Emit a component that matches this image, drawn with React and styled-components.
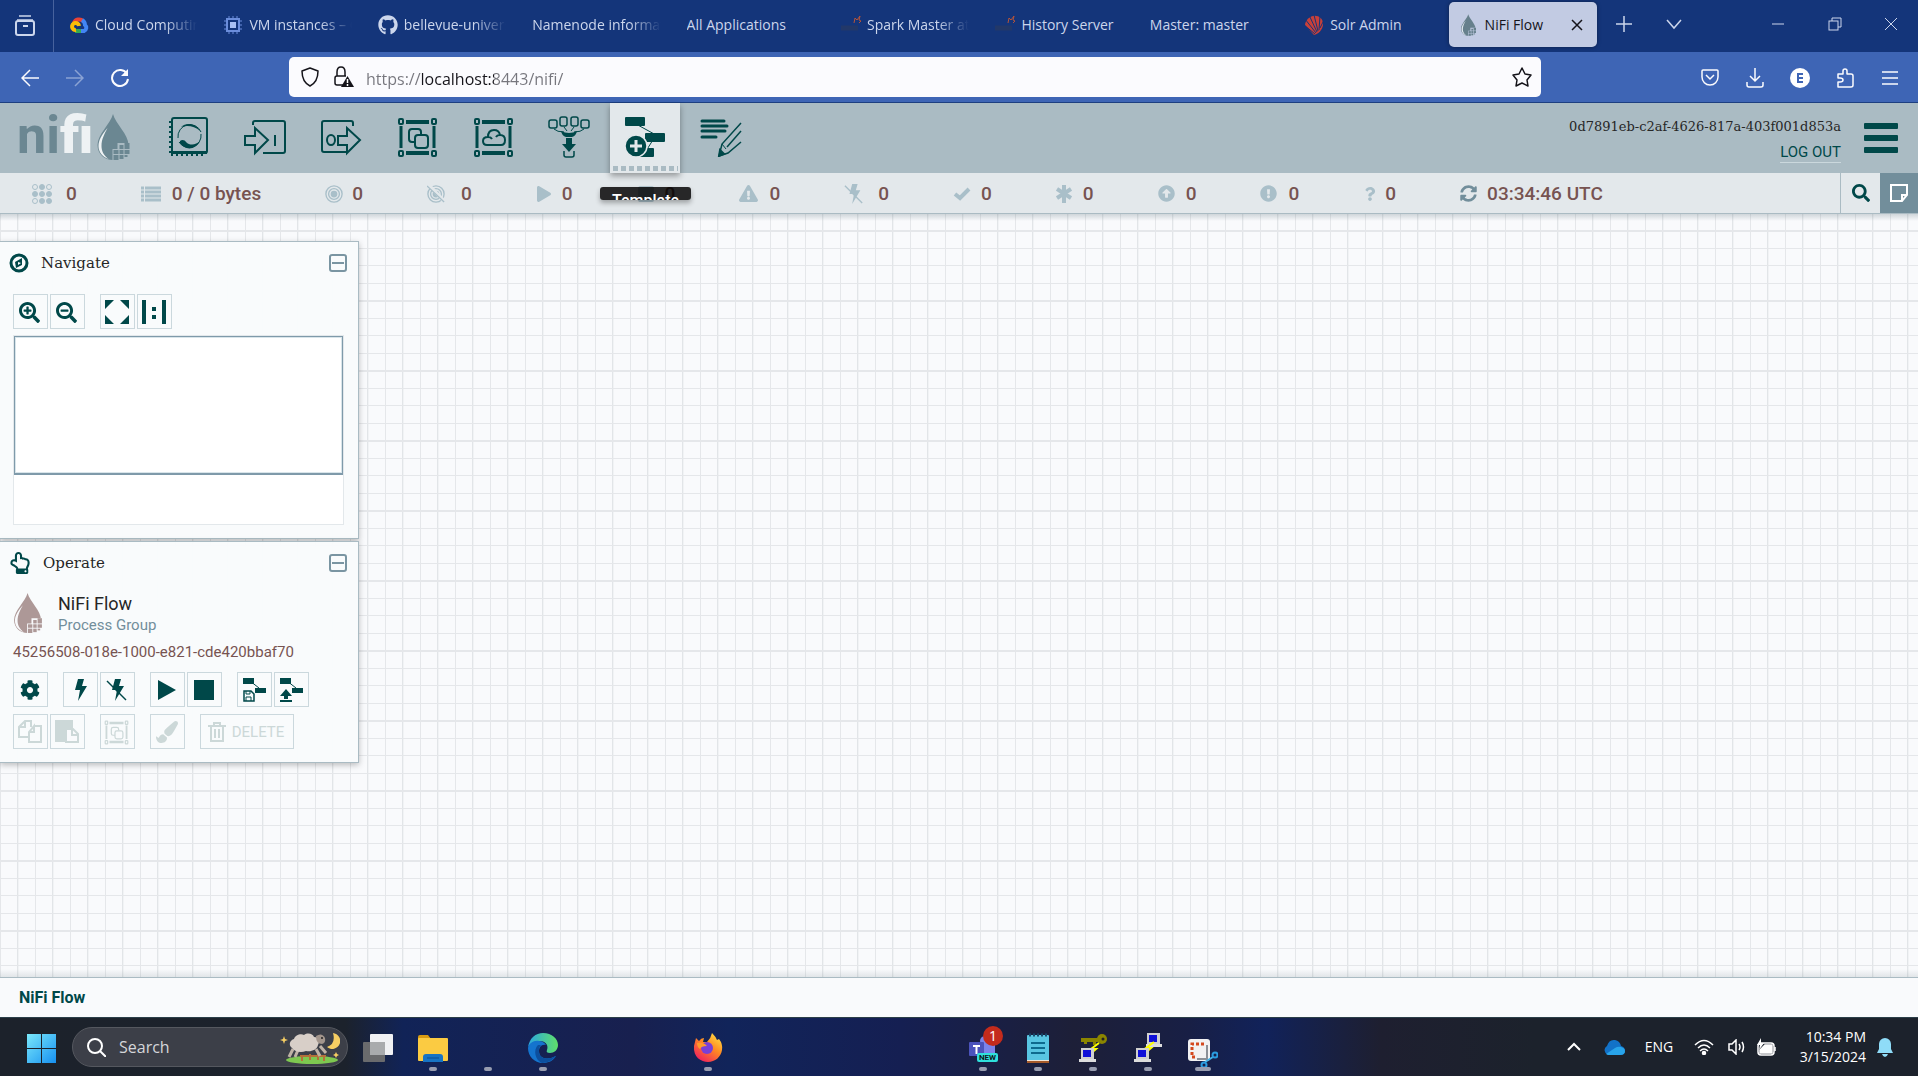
import React from "react";
import styled, { createGlobalStyle, css } from "styled-components";
import {
  FaPlay, FaArrowAltCircleUp, FaExclamationTriangle, FaExclamationCircle,
  FaQuestion, FaSyncAlt, FaSearch, FaSearchPlus, FaSearchMinus, FaCog, FaPaintBrush,
  FaRegHandPointUp, FaGithub, FaStop,
} from "react-icons/fa";

const teal = "#004849";
const slate = "#728e9b";
const mist = "#aabbc3";
const brown = "#775351";
const ui = `"Open Sans", "Noto Sans", sans-serif`;
const roboto = `Roboto, "Noto Sans", sans-serif`;
const slab = `"DejaVu Serif", serif`;

const Global = createGlobalStyle`
  *, *::before, *::after { box-sizing: border-box; }
  body { margin: 0; font-family: ${roboto}; }
  button { font: inherit; color: inherit; background: none; border: 0; padding: 0; cursor: pointer; }
  svg { display: block; flex: none; }
`;

const Page = styled.div`
  min-height: 100vh;
  display: flex;
  flex-direction: column;
`;

/* ---------- browser ---------- */
const TabBar = styled.header`
  display: flex;
  align-items: stretch;
  height: 52px;
  background: #14357a;
  color: #ccd6ec;
  font: 14px/20px ${ui};
`;
const ViewButton = styled.button`
  flex: 0 0 54px;
  display: grid;
  place-items: center;
  padding-right: 4px;
  border-right: 1px solid #47629d;
`;
const TabList = styled.div`
  flex: 0 1 1544px;
  min-width: 0;
  margin-left: 2px;
  display: grid;
  grid-template-columns: repeat(10, 1fr);
`;
const Tab = styled.div`
  display: flex;
  align-items: center;
  gap: 6px;
  min-width: 0;
  margin: 2px 3px 5px;
  padding: 1px 10px 0;
  border-radius: 5px;
  ${(p) => p.$active && css`
    background: #c2cbe3;
    color: #15141a;
    box-shadow: 0 0 4px rgba(0, 0, 0, 0.4);
  `}
`;
const Favicon = styled.span`
  flex: 0 0 20px;
  display: grid;
  place-items: center;
`;
const TabTitle = styled.button`
  flex: 1;
  min-width: 0;
  overflow: hidden;
  white-space: nowrap;
  text-align: left;
  ${(p) => p.$fade && css`mask-image: linear-gradient(90deg, #000 calc(100% - 32px), transparent);`}
`;
const IconButton = styled.button`
  display: grid;
  place-items: center;
  flex: 0 0 ${(p) => p.$w || 45}px;
  height: ${(p) => p.$h || 40}px;
  color: ${(p) => p.$color || "inherit"};
`;
const TabTools = styled.div`
  display: flex;
  align-items: center;
  height: 48px;
`;
const WindowTools = styled(TabTools)`
  margin-left: auto;
`;
const NavBar = styled.div`
  display: grid;
  grid-template-columns: 289px minmax(300px, 1252px) minmax(240px, 1fr);
  align-items: center;
  height: 51px;
  background: #3e65b5;
  border-bottom: 1px solid #1d3f80;
  color: #fbfbfe;
`;
const NavGroup = styled.div`
  display: flex;
  padding: 2px 6px 0 7px;
  justify-content: ${(p) => (p.$end ? "flex-end" : "flex-start")};
`;
const UrlBox = styled.form`
  display: flex;
  align-items: center;
  height: 40px;
  padding: 0 2px 0 3px;
  border-radius: 5px;
  background: #fbfbfe;
  color: #15141a;
`;
const UrlInput = styled.input`
  flex: 1;
  min-width: 0;
  margin-left: 5px;
  padding: 3px 0 0;
  border: 0;
  outline: 0;
  font: 16px/24px ${ui};
  color: transparent;
  background: linear-gradient(90deg, #76767d 0 56px, #15141a 56px 128px, #76767d 128px);
  background-clip: text;
  -webkit-background-clip: text;
`;

/* ---------- nifi header ---------- */
const NifiHeader = styled.header`
  display: flex;
  align-items: center;
  height: 70px;
  background: ${mist};
`;
const Logo = styled.div`
  flex: 0 0 154px;
  display: flex;
  align-items: center;
  gap: 4px;
  padding: 0 0 4px 17px;
  color: #6b8792;
  font: 700 52px/52px ${roboto};
  b { color: #eef2f4; }
  svg { margin-top: 2px; }
`;
const ToolRow = styled.nav`
  display: flex;
  gap: 6px;
`;
const Tool = styled.button`
  position: relative;
  width: 70px;
  height: 70px;
  display: grid;
  place-items: center;
  padding-bottom: 2px;
  color: ${teal};
  ${(p) => p.$active && css`
    background: #e3e8eb;
    box-shadow: 0 3px 6px rgba(0, 0, 0, 0.35);
    &::after {
      content: "";
      position: absolute;
      left: 3px;
      right: 2px;
      bottom: 2px;
      height: 5px;
      background: repeating-linear-gradient(90deg, ${mist} 0 5px, transparent 5px 8px);
    }
  `}
`;
const Tooltip = styled.span`
  position: absolute;
  z-index: 2;
  top: 84px;
  left: -10px;
  width: 91px;
  height: 13px;
  padding-top: 4px;
  overflow: hidden;
  border-radius: 3px;
  background: rgba(0, 0, 0, 0.83);
  box-shadow: 0 3px 5px rgba(0, 0, 0, 0.3);
  color: #fff;
  text-align: center;
  font: 500 16px/20px ${roboto};
`;
const User = styled.div`
  margin-left: auto;
  display: flex;
  flex-direction: column;
  align-items: flex-end;
  gap: 6px;
  padding-top: 4px;
  color: #262626;
  font: 13px/20px ${slab};
`;
const LogOut = styled.a`
  color: ${teal};
  font: 15px/19px ${roboto};
  text-decoration: none;
  border-bottom: 1px solid #cbd8dd;
`;
const Burger = styled.button`
  width: 34px;
  height: 30px;
  margin: 0 20px 0 23px;
  display: flex;
  flex-direction: column;
  justify-content: space-between;
  span { height: 6px; border-radius: 1px; background: ${teal}; }
`;

/* ---------- status ---------- */
const StatusBar = styled.div`
  display: flex;
  height: 41px;
  background: #e3e8eb;
  border-bottom: 1px solid ${mist};
`;
const StatusItems = styled.div`
  flex: 1;
  min-width: 0;
  overflow: hidden;
  display: flex;
  align-items: center;
  gap: 64px;
  padding: 1px 0 0 32px;
  color: ${brown};
  font: 500 19px/24px ${roboto};
`;
const Status = styled.div`
  display: flex;
  white-space: nowrap;
`;
const StatusIcon = styled.span`
  width: ${(p) => p.$w}px;
  display: flex;
  align-items: center;
  color: ${(p) => p.$color || "#a9bfc9"};
`;
const StatusButton = styled.button`
  width: ${(p) => (p.$dark ? 38 : 40)}px;
  display: grid;
  place-items: center;
  color: ${(p) => (p.$dark ? "#fff" : teal)};
  background: ${(p) => (p.$dark ? slate : "transparent")};
  border-left: ${(p) => (p.$dark ? "0" : `1px solid ${mist}`)};
`;

/* ---------- canvas ---------- */
const Canvas = styled.main`
  flex: 1;
  padding-top: 27px;
  background:
    linear-gradient(180deg, rgba(100, 120, 130, 0.28), transparent) 0 0 / 100% 7px no-repeat,
    linear-gradient(0deg, rgba(100, 120, 130, 0.16), transparent) 0 100% / 100% 8px no-repeat,
    linear-gradient(#e5e7ea 0 2px, transparent 2px) 0 16px / 70px 70px,
    linear-gradient(#e5e7ea 0 1px, transparent 1px 17px, #e5e7ea 17px 18px, transparent 18px) 0 -1px / 35px 35px,
    linear-gradient(90deg, #e5e7ea 0 1px, transparent 1px 17px, #e2e5e8 17px 18px, #f1f3f5 18px 19px, transparent 19px) 0 0 / 35px 35px,
    #f9fafc;
`;
const PanelStack = styled.div`
  width: 359px;
  display: flex;
  flex-direction: column;
  gap: 2px;
`;
const Panel = styled.section`
  padding: 0 14px 13px 13px;
  background: rgba(249, 251, 252, 0.97);
  border: 1px solid ${mist};
  border-left: 0;
  box-shadow: 0 2px 6px rgba(0, 0, 0, 0.25);
`;
const PanelHead = styled.div`
  display: flex;
  align-items: center;
  gap: 12px;
  height: 42px;
  margin: 0 -3px 0 -4px;
  color: ${teal};
`;
const PanelTitle = styled.h2`
  flex: 1;
  margin: 0;
  color: #262626;
  font: 400 15px/20px ${slab};
`;
const Collapse = styled.button`
  width: 18px;
  height: 18px;
  display: grid;
  place-items: center;
  border: 2px solid #7a95a2;
  border-radius: 3px;
  span { width: 12px; height: 2px; background: #7a95a2; }
`;
const ButtonRow = styled.div`
  display: flex;
  gap: 15px;
  margin-top: ${(p) => p.$top}px;
`;
const ButtonPair = styled.div`
  display: flex;
  gap: 2px;
`;
const Square = styled.button`
  display: flex;
  align-items: center;
  justify-content: center;
  gap: 6px;
  width: ${(p) => (p.$wide ? 94 : 35)}px;
  height: 35px;
  padding: 1px 2px 0 0;
  border: 1px solid #cbd8dd;
  color: ${teal};
  font: 15px/20px ${roboto};
  &:disabled { color: #ccd8d8; cursor: default; }
`;
const Birdseye = styled.div`
  height: 190px;
  margin-top: 6px;
  background: #fff;
  border: 1px solid #e3e8eb;
`;
const Brush = styled.div`
  height: 139px;
  border: 2px solid #7f9aaa;
  border-width: 1px 1px 2px;
  box-shadow: inset 0 0 0 1px #d9e5ea;
`;
const Context = styled.div`
  display: flex;
  align-items: center;
  gap: 15px;
  margin-top: 8px;
`;
const ContextName = styled.div`
  color: #262626;
  font: 18px/24px ${roboto};
`;
const ContextType = styled.div`
  color: ${slate};
  font: 15px/18px ${roboto};
`;
const ContextId = styled.div`
  margin-top: 8px;
  color: ${brown};
  font: 15px/20px ${roboto};
`;
const Crumbs = styled.footer`
  display: flex;
  align-items: center;
  height: 40px;
  padding-left: 19px;
  background: #f9fafc;
  border-top: 1px solid ${mist};
  a { color: ${teal}; font: 700 16px/20px ${roboto}; text-decoration: none; }
`;

/* ---------- taskbar ---------- */
const Taskbar = styled.footer`
  display: flex;
  align-items: center;
  height: 59px;
  padding-left: 18px;
  border-top: 1px solid #2c3f49;
  background: linear-gradient(90deg, #1c222b 0, #1c222c 18%, #112357 21%, #18204f 33%, #11245a 38%, #151f52 47%, #1d1f38 56%, #181f45 62%, #11225a 66%, #1e1f30 72%, #1c222c 80%);
  color: #fff;
  font: 14px/20px ${ui};
`;
const SearchPill = styled.label`
  flex: 0 0 276px;
  min-width: 0;
  display: flex;
  align-items: center;
  gap: 13px;
  height: 40px;
  margin: 0 2px 0 8px;
  padding: 0 7px 0 14px;
  border: 1px solid #55585f;
  border-radius: 20px;
  background: #3c3f48;
`;
const SearchInput = styled.input`
  flex: 1;
  width: 0;
  min-width: 0;
  padding: 0;
  border: 0;
  outline: 0;
  background: none;
  font: 16px/24px ${ui};
  color: #d4d6da;
  &::placeholder { color: #d4d6da; opacity: 1; }
`;
const AppButton = styled.button`
  position: relative;
  flex: 0 0 ${(p) => p.$w || 55}px;
  height: 58px;
  display: grid;
  place-items: center;
  padding-top: ${(p) => (p.$low ? 14 : 2)}px;
  &::after {
    content: "";
    position: absolute;
    left: calc(50% - ${(p) => (p.$wideDot ? 8 : 4)}px);
    bottom: 5px;
    width: ${(p) => (p.$wideDot ? 16 : 8)}px;
    height: 4px;
    border-radius: 2px;
    background: ${(p) => (p.$dot ? "#989db0" : "transparent")};
  }
`;
const Spacer = styled.span`
  flex: 0 1 ${(p) => p.$w}px;
`;
const Badge = styled.span`
  position: absolute;
  top: 8px;
  right: 7px;
  width: 20px;
  height: 20px;
  border-radius: 50%;
  background: #c42b1c;
  font-size: 14px;
  text-align: center;
`;
const NewFlag = styled.span`
  position: absolute;
  top: 35px;
  left: 22px;
  width: 21px;
  height: 9px;
  border-radius: 2px;
  background: #2fe0dc;
  color: #10151c;
  font: 700 8px/9px ${roboto};
  text-align: center;
`;
const Tray = styled.div`
  margin-left: auto;
  display: flex;
  align-items: center;
  padding-right: 18px;
`;
const Clock = styled.button`
  width: 82px;
  margin-right: 4px;
  text-align: right;
  font: 14px/20px ${ui};
`;
const Lang = styled.button`
  width: 50px;
  font: 14px/20px ${ui};
`;

/* ---------- drawings ---------- */
const Svg = ({ w, h = w, vb, children, ...rest }) => (
  <svg width={w} height={h} viewBox={vb || `0 0 ${w} ${h}`} fill="none" stroke="currentColor" strokeWidth="2" aria-hidden="true" {...rest}>{children}</svg>
);

const Drop = ({ w, h, color, shine, gap }) => (
  <Svg w={w} h={h} vb="0 0 32 46" stroke="none">
    <path d="M15.500 0C13 10 0 20 0 31c0 9 7 15 15.500 15S31 40 31 31C31 20 18 10 15.500 0z" fill={color} />
    <path d="M10 14C4 21 1 26 1 32c0 6 4 11 10 13-5-4-7-8-7-13 0-7 3-12 6-18z" fill={shine} />
    <path d="M15 46V35h5v-6h12v17z" fill={gap} />
    <g fill={color}>
      <rect x="22" y="31" width="4" height="4" /><rect x="27" y="29" width="5" height="6" />
      <rect x="16" y="36" width="5" height="4" /><rect x="22" y="36" width="4" height="4" /><rect x="27" y="36" width="5" height="4" />
      <rect x="16" y="41" width="5" height="5" /><rect x="22" y="41" width="4" height="4" /><rect x="27" y="41" width="3" height="2" />
    </g>
  </Svg>
);

const ProcessorIcon = () => (
  <Svg w={40}>
    <rect x="3" y="1" width="35" height="35" rx="2" />
    <path d="M2 35.500h36" strokeWidth="3" />
    <path d="M1 4v34" strokeDasharray="2 3" />
    <path d="M2 38h34" strokeDasharray="2 3" />
    <path d="M9 21A12 12 0 0 1 32 15" strokeWidth="1" />
    <path d="M32 17A12 12 0 0 1 10 25" strokeWidth="1" />
    <path d="M12 10C17 5 27 6 31 14 26 9 18 8 12 10z" fill="currentColor" stroke="none" />
    <path d="M11 24c2-2 5-1 6 1 4 4 10 3 14-1-4 9-15 10-20 2z" fill="currentColor" stroke="none" />
  </Svg>
);
const InputIcon = () => (
  <Svg w={42} h={40}>
    <path d="M9 8V6q0-2 2-2h28q2 0 2 2v28q0 2-2 2H19" />
    <path d="M1 19h10v-8l13 12-13 13v-8H1z" />
    <path d="M31 18v11" />
  </Svg>
);
const OutputIcon = () => (
  <Svg w={42} h={40}>
    <path d="M33 9V6q0-2-2-2H4Q2 4 2 6v27q0 2 2 2h22" />
    <path d="M18 19h9v-8l13 12-13 13v-8h-9z" />
    <ellipse cx="11" cy="23" rx="4" ry="5" />
  </Svg>
);
const Frame = () => (
  <>
    <path d="M4 9v22M37 9v22" strokeWidth="3" />
    <path d="M9 5h23M9 36h23" strokeWidth="4" />
    {[[2, 2], [35, 2], [2, 34], [35, 34]].map(([x, y]) => <rect key={`${x}${y}`} x={x} y={y} width="4" height="5" rx="1" />)}
  </>
);
const GroupIcon = ({ w = 41 }) => (
  <Svg w={w} vb="0 0 41 41">
    <Frame />
    <path d="M18 25h-3q-3 0-3-3v-7q0-3 3-3h6q3 0 3 3v2" />
    <rect x="18" y="18" width="13" height="13" rx="3" />
  </Svg>
);
const RemoteIcon = () => (
  <Svg w={41}>
    <Frame />
    <path d="M14 28q-4 0-4-4t5-4q0-7 6-7 5 0 6 5 5 0 5 5t-4 5zM15 20q3 0 4 2M27 18q-3 0-4 2" />
  </Svg>
);
const FunnelIcon = () => (
  <Svg w={42} h={42} strokeWidth="1.500">
    <rect x="1" y="4" width="8" height="8" rx="2" /><rect x="12" y="1" width="7" height="9" rx="2" />
    <rect x="23" y="1" width="7" height="9" rx="2" /><rect x="33" y="4" width="8" height="8" rx="2" />
    <path d="M6 13q3 3 10 3M16 11l3 4M26 11l-3 4M36 13q-3 3-10 3" strokeWidth="1" />
    <path d="M13 15q8 4 16 0-1 5-5 6h-6q-4-1-5-6z" fill="currentColor" stroke="none" />
    <path d="M18 22h6v6h4l-7 8-7-8h4z" fill="currentColor" stroke="none" />
    <path d="M16 35v4q0 2 2 2h6q2 0 2-2v-4" />
  </Svg>
);
const TemplateIcon = () => (
  <Svg w={42} h={42}>
    <path d="M12 8l20 11L22 35" strokeWidth="1" />
    <g fill="currentColor" stroke="none">
      <rect x="1" y="1" width="20" height="9" rx="1" /><rect x="21" y="17" width="20" height="9" rx="1" /><rect x="14" y="32" width="16" height="9" rx="1" />
    </g>
    <circle cx="12" cy="30" r="11" fill="currentColor" stroke="#e3e8eb" strokeWidth="1.500" />
    <path d="M12 24v12M6 30h12" stroke="#e3e8eb" strokeWidth="3" />
  </Svg>
);
const LabelIcon = () => (
  <Svg w={42} h={40}>
    <path d="M2 4h22M2 9h25M2 14h23M2 20h14" strokeWidth="3" strokeLinecap="round" />
    <path d="M41 6L22 27l-3 12 9-3 13-11" strokeWidth="1.500" />
    <path d="M27 30l14-16" strokeWidth="1.500" /><path d="M22 27l4 5" strokeWidth="1" />
    <path d="M20 33l4 4-5 2z" fill="currentColor" />
  </Svg>
);
const CompassIcon = () => (
  <Svg w={20} strokeWidth="3">
    <circle cx="10" cy="10" r="8" />
    <path d="M6 9l7-4v7l-6 3z" fill="currentColor" stroke="none" /><path d="M9 9v3l3-2z" fill="#f9fafc" stroke="none" />
  </Svg>
);
const SmallTemplate = ({ children }) => (
  <Svg w={24} h={26}>
    <path d="M8 4l9 7" strokeWidth="1" />
    <g fill="currentColor" stroke="none"><rect x="1" y="1" width="11" height="6" /><rect x="13" y="11" width="11" height="5" /></g>
    {children}
  </Svg>
);
const Bolt = ({ off, w = 20 }) => (
  <Svg w={w} vb="0 0 20 22" stroke="none">
    <path d="M8 0h6l-2 7h5L8 22l2-11H5z" fill="currentColor" />
    {off && <path d="M0 2l19 19" stroke="currentColor" strokeWidth="1.500" />}
  </Svg>
);
const Target = ({ off }) => (
  <Svg w={18} vb="0 0 20 20" strokeWidth="1.500">
    <circle cx="10" cy="10" r="9" /><circle cx="10" cy="10" r="6" /><circle cx="10" cy="10" r="3" fill="currentColor" />
    {off && <><path d="M2 0l18 19" stroke="#e3e8eb" strokeWidth="4" /><path d="M0 1l19 18" /></>}
  </Svg>
);
const Threads = () => (
  <Svg w={20} strokeWidth="1">
    {[3, 10, 17].map((y, r) => [3, 10, 17].map((x, c) => (
      <circle key={`${x}-${y}`} cx={x} cy={y} r="2.500" fill={(r + c) % 2 || (r === 1 && c < 2) || (r === 2 && c === 2) ? "currentColor" : "none"} />
    )))}
  </Svg>
);
const QueueIcon = () => (
  <Svg w={20} h={16} strokeWidth="3"><path d="M0 2h3M0 6h3M0 10h3M0 14h3M4 2h16M4 6h16M4 10h16M4 14h16" /></Svg>
);
const CheckIcon = () => <Svg w={18} h={14} strokeWidth="4"><path d="M2 7l5 4 9-9" /></Svg>;
const AsteriskIcon = () => <Svg w={16} h={18} strokeWidth="4"><path d="M8 0v18M1 4l14 9M15 4L1 13" /></Svg>;
const CloudLogo = () => (
  <Svg w={20} strokeWidth="4">
    <path d="M5 8a5.500 5.500 0 0 1 9-2" stroke="#ea4335" /><path d="M13 5a6 6 0 0 1 3 5 3.500 3.500 0 0 1-1 6h-4" stroke="#4285f4" />
    <path d="M12 16H6" stroke="#34a853" /><path d="M7 15a3.500 3.500 0 1 1 3-4" stroke="#fbbc05" />
  </Svg>
);
const Chip = () => (
  <Svg w={20}>
    <path d="M6 1v18M10 1v18M14 1v18M1 6h18M1 10h18M1 14h18" stroke="#6b8ddb" strokeWidth="1" />
    <rect x="4" y="4" width="12" height="12" fill="#14357a" stroke="#6b8ddb" /><rect x="7" y="7" width="6" height="6" fill="#a9c0f3" stroke="none" />
  </Svg>
);
const Spark = () => (
  <Svg w={20}>
    <path d="M0 13h17" stroke="#2c3a5e" strokeWidth="5" opacity=".6" />
    <path d="M13 8l1-5 2 2 3-4-1 4 2 1-2 2" stroke="#b5543a" strokeWidth="1" />
  </Svg>
);
const Solr = () => (
  <Svg w={20}>
    <path d="M10 20C14 19 19 15 19 9S14 0 9 1 1 7 1 10z" fill="#c8403a" stroke="none" />
    <path d="M12 18L1 4M13 17L5 0M14 16L10 0M15 15l1-14M16 13l4-8M11 19L0 10" stroke="#14357a" strokeWidth="1" />
  </Svg>
);

const tabs = [
  ["Cloud Computing Services", <CloudLogo />, true],
  ["VM instances – Compute", <Chip />, true],
  ["bellevue-university/dsc", <FaGithub size={20} />, true],
  ["Namenode information", null, true],
  ["All Applications", null],
  ["Spark Master at spark", <Spark />, true],
  ["History Server", <Spark />],
  ["Master: master", null],
  ["Solr Admin", <Solr />],
];
const tools = [
  ["Processor", ProcessorIcon], ["Input Port", InputIcon], ["Output Port", OutputIcon], ["Process Group", GroupIcon],
  ["Remote Process Group", RemoteIcon], ["Funnel", FunnelIcon], ["Template", TemplateIcon], ["Label", LabelIcon],
];
const statuses = [
  [<Threads />, 34, "0"], [<QueueIcon />, 31, "0 / 0 bytes"], [<Target />, 27, "0"], [<Target off />, 34, "0"],
  [<FaPlay size={16} />, 26, "0"], [<FaStop size={18} />, 28, "0"], [<FaExclamationTriangle size={19} />, 30, "0"],
  [<Bolt off />, 34, "0"], [<CheckIcon />, 28, "0"], [<AsteriskIcon />, 27, "0"],
  [<FaArrowAltCircleUp size={17} />, 28, "0"], [<FaExclamationCircle size={17} />, 28, "0"], [<FaQuestion size={14} />, 22, "0"],
];

export default function App() {
  return (
    <>
      <Global />
      <Page>
        <TabBar>
          <ViewButton aria-label="Recent browsing">
            <Svg w={20} h={22}><path d="M4 1h12M2 5h16" strokeWidth="1.500" /><rect x="1" y="6" width="18" height="14" rx="2" /><path d="M8 11h5" /></Svg>
          </ViewButton>
          <TabList>
            {tabs.map(([title, icon, fade]) => (
              <Tab key={title}>{icon && <Favicon>{icon}</Favicon>}<TabTitle $fade={fade}>{title}</TabTitle></Tab>
            ))}
            <Tab $active>
              <Favicon><Drop w={15} h={22} color="#66808c" shine="#dfe6ee" gap="#c2cbe3" /></Favicon>
              <TabTitle>NiFi Flow</TabTitle>
              <IconButton $w={20} aria-label="Close tab"><Svg w={12} strokeWidth="1.500"><path d="M1 1l10 10M11 1L1 11" /></Svg></IconButton>
            </Tab>
          </TabList>
          <TabTools>
            <IconButton $w={47} aria-label="New tab"><Svg w={16} strokeWidth="1.500"><path d="M8 0v16M0 8h16" /></Svg></IconButton>
            <IconButton $w={54} aria-label="List all tabs"><Svg w={16}><path d="M1 4l7 8 7-8" strokeWidth="1.500" /></Svg></IconButton>
          </TabTools>
          <WindowTools>
            <IconButton $w={57} aria-label="Minimize"><Svg w={12} strokeWidth="1"><path d="M0 6h12" /></Svg></IconButton>
            <IconButton $w={57} aria-label="Restore"><Svg w={14} strokeWidth="1"><rect x="1" y="4" width="9" height="9" /><path d="M4 4V1h9v9h-3" /></Svg></IconButton>
            <IconButton $w={55} aria-label="Close"><Svg w={14} strokeWidth="1"><path d="M1 1l12 12M13 1L1 13" /></Svg></IconButton>
          </WindowTools>
        </TabBar>
        <NavBar>
          <NavGroup>
            <IconButton aria-label="Back"><Svg w={18}><path d="M18 9H1M9 1L1 9l8 8" strokeWidth="1.500" /></Svg></IconButton>
            <IconButton $color="#8ba3d4" aria-label="Forward"><Svg w={18}><path d="M0 9h17M9 1l8 8-8 8" strokeWidth="1.500" /></Svg></IconButton>
            <IconButton aria-label="Reload"><Svg w={20}><path d="M17 6a8 8 0 1 0 1 5" /><path d="M18 1v7h-7z" fill="currentColor" stroke="none" /></Svg></IconButton>
          </NavGroup>
          <UrlBox>
            <IconButton $w={35} type="button" aria-label="Tracking protection"><Svg w={18} h={20} strokeWidth="1.500"><path d="M9 1l8 3c0 7-2 12-8 15C3 16 1 11 1 4z" strokeLinejoin="round" /></Svg></IconButton>
            <IconButton $w={34} type="button" aria-label="Site security"><Svg w={20} h={22} strokeWidth="1.500"><path d="M9 19H3q-2 0-2-2v-5q0-2 2-2h9M3 10V6q0-5 4-5t4 5v4" /><path d="M13.500 10L20 21H7z" fill="currentColor" stroke="none" /><path d="M13.500 13v4M13.500 18v2" stroke="#fff" /></Svg></IconButton>
            <UrlInput aria-label="Address" defaultValue="https://localhost:8443/nifi/" />
            <IconButton $w={35} type="button" aria-label="Bookmark this page"><Svg w={20} strokeWidth="1.500"><path d="M10 1l3 6 6 1-4 5 1 6-6-3-6 3 1-6-4-5 6-1z" strokeLinejoin="round" /></Svg></IconButton>
          </UrlBox>
          <NavGroup $end>
            <IconButton aria-label="Save to Pocket"><Svg w={18} strokeWidth="1.500"><path d="M2 1h14q1 0 1 1v6a8 8 0 0 1-16 0V2q0-1 1-1z" /><path d="M5 6l4 4 4-4" /></Svg></IconButton>
            <IconButton aria-label="Downloads"><Svg w={18} h={20}><path d="M9 0v13M4 8l5 5 5-5M1 14v3q0 2 2 2h12q2 0 2-2v-3" strokeWidth="1.500" /></Svg></IconButton>
            <IconButton aria-label="Account"><Svg w={20}><circle cx="10" cy="10" r="10" fill="#fff" stroke="none" /><path d="M13 6H8v8h5M8 10h5" stroke="#3e65b5" /></Svg></IconButton>
            <IconButton aria-label="Extensions"><Svg w={18} h={20} strokeWidth="1.500"><path d="M2 6h5V3q0-2 2-2t2 2v3h4q2 0 2 2v9q0 2-2 2H2v-5h2q3 0 3-2t-3-2H2z" strokeLinejoin="round" /></Svg></IconButton>
            <IconButton aria-label="Menu"><Svg w={16} h={14} strokeWidth="1.500"><path d="M0 1h16M0 7h16M0 13h16" /></Svg></IconButton>
          </NavGroup>
        </NavBar>

        <NifiHeader>
          <Logo><span>ni<b>fi</b></span><Drop w={33} h={46} color="#6b8792" shine="#eef2f4" gap={mist} /></Logo>
          <ToolRow aria-label="Components">
            {tools.map(([name, Icon]) => (
              <Tool key={name} aria-label={name} $active={name === "Template"}>
                <Icon />
                {name === "Template" && <Tooltip>Template</Tooltip>}
              </Tool>
            ))}
          </ToolRow>
          <User><span>0d7891eb-c2af-4626-817a-403f001d853a</span><LogOut href="#logout">LOG OUT</LogOut></User>
          <Burger aria-label="Global menu"><span /><span /><span /></Burger>
        </NifiHeader>

        <StatusBar>
          <StatusItems>
            {statuses.map(([icon, w, value], i) => (
              <Status key={i}><StatusIcon $w={w}>{icon}</StatusIcon>{value}</Status>
            ))}
            <Status><StatusIcon $w={27} $color={slate}><FaSyncAlt size={17} /></StatusIcon>03:34:46 UTC</Status>
          </StatusItems>
          <StatusButton aria-label="Search"><FaSearch size={18} /></StatusButton>
          <StatusButton $dark aria-label="Bulletins"><Svg w={18}><path d="M1 1h16v10l-5 6H1z" /><path d="M17 11h-5v6" /></Svg></StatusButton>
        </StatusBar>

        <Canvas>
          <PanelStack>
            <Panel>
              <PanelHead>
                <CompassIcon /><PanelTitle>Navigate</PanelTitle>
                <Collapse aria-label="Collapse Navigate"><span /></Collapse>
              </PanelHead>
              <ButtonRow $top={10}>
                <ButtonPair>
                  <Square aria-label="Zoom in"><FaSearchPlus size={21} /></Square>
                  <Square aria-label="Zoom out"><FaSearchMinus size={21} /></Square>
                </ButtonPair>
                <ButtonPair>
                  <Square aria-label="Fit"><Svg w={24} stroke="none"><path d="M0 0h9L0 9zM24 0v9l-9-9zM0 24v-9l9 9zM24 24h-9l9-9z" fill="currentColor" /></Svg></Square>
                  <Square aria-label="Actual size"><Svg w={24} strokeWidth="4"><path d="M2 0v24M22 0v24M12 7v4M12 15v4" /></Svg></Square>
                </ButtonPair>
              </ButtonRow>
              <Birdseye><Brush /></Birdseye>
            </Panel>
            <Panel>
              <PanelHead>
                <FaRegHandPointUp size={22} /><PanelTitle>Operate</PanelTitle>
                <Collapse aria-label="Collapse Operate"><span /></Collapse>
              </PanelHead>
              <Context>
                <Drop w={30} h={40} color="#ad9897" shine="#f9fafc" gap="#f9fafc" />
                <div><ContextName>NiFi Flow</ContextName><ContextType>Process Group</ContextType></div>
              </Context>
              <ContextId>45256508-018e-1000-e821-cde420bbaf70</ContextId>
              <ButtonRow $top={10}>
                <Square aria-label="Configuration"><FaCog size={20} /></Square>
                <ButtonPair>
                  <Square aria-label="Enable"><Bolt w={22} /></Square>
                  <Square aria-label="Disable"><Bolt off w={22} /></Square>
                </ButtonPair>
                <ButtonPair>
                  <Square aria-label="Start"><Svg w={18} h={20} stroke="none"><path d="M0 0l18 10L0 20z" fill="currentColor" /></Svg></Square>
                  <Square aria-label="Stop"><Svg w={20} stroke="none"><rect width="20" height="20" fill="currentColor" /></Svg></Square>
                </ButtonPair>
                <ButtonPair>
                  <Square aria-label="Create template"><SmallTemplate><path d="M2 14h7l3 3v7H2z" strokeWidth="1.500" /><path d="M4 14v3h4v-3M4 24v-4h5v4" strokeWidth="1" /></SmallTemplate></Square>
                  <Square aria-label="Upload template"><SmallTemplate><path d="M7 12l6 7H9v3H5v-3H1zM1 23h12v2H1z" fill="currentColor" stroke="none" /></SmallTemplate></Square>
                </ButtonPair>
              </ButtonRow>
              <ButtonRow $top={7}>
                <ButtonPair>
                  <Square disabled aria-label="Copy"><Svg w={24}><path d="M7 1h6v6M10 17H1V7l6-6v6H1" /><path d="M16 6h7v16H11V12l5-6v6h-5" /></Svg></Square>
                  <Square disabled aria-label="Paste"><Svg w={24}><path d="M1 1h16v6h-6v14H1z" fill="currentColor" /><path d="M11 9h7l5 5v8H11z" fill="#f9fafc" /><path d="M17 9v6h6" /></Svg></Square>
                </ButtonPair>
                <Square disabled aria-label="Group"><GroupIcon w={25} /></Square>
                <Square disabled aria-label="Change color"><FaPaintBrush size={22} /></Square>
                <Square disabled $wide>
                  <Svg w={18} h={20}><path d="M0 4h18M6 4V1h6v3M3 4v15h12V4M7 7v9M11 7v9" /></Svg>DELETE
                </Square>
              </ButtonRow>
            </Panel>
          </PanelStack>
        </Canvas>
        <Crumbs><a href="#root-group">NiFi Flow</a></Crumbs>

        <Taskbar>
          <AppButton $w={46} aria-label="Start">
            <Svg w={29} stroke="none"><defs><linearGradient id="win" x2="1" y2="1"><stop stopColor="#7be9fb" /><stop offset="1" stopColor="#1690f0" /></linearGradient></defs><path d="M0 0h14v14H0zM15 0h14v14H15zM0 15h14v14H0zM15 15h14v14H15z" fill="url(#win)" /></Svg>
          </AppButton>
          <SearchPill>
            <Svg w={19}><circle cx="8" cy="8" r="7" /><path d="M13 13l6 6" /></Svg>
            <SearchInput aria-label="Search" placeholder="Search" />
            <Svg w={60} h={34} stroke="none">
              <ellipse cx="32" cy="30" rx="26" ry="4" fill="#7ec850" />
              <path d="M22 25v6M30 24v6M38 24v6M44 25v6M20 26h26" stroke="#b4713a" />
              <path d="M13 19l-4 8M18 20l-3 7M36 19l4 7M40 16l6 7" stroke="#bfb2a6" strokeWidth="3" />
              <path d="M12 18c-4-3-2-8 2-9 1-4 7-6 10-4 4-3 9-1 10 2 5 0 6 5 4 8-1 5-7 7-12 6-5 2-11 1-14-3z" fill="#d8cfc8" />
              <path d="M36 6q6-4 9 2 1 5-3 6-6 0-6-8z" fill="#a2958c" /><circle cx="42" cy="8" r="1" fill="#222" />
              <path d="M53 3a8 8 0 1 1-6 14q9-3 6-14z" fill="#f6ce63" />
              <path d="M4 6l1 3 3 1-3 1-1 3-1-3-3-1 3-1zM56 22l1 2 2 1-2 1-1 2-1-2-2-1 2-1z" fill="#f6ce63" />
            </Svg>
          </SearchPill>
          <AppButton aria-label="Task view"><Svg w={30} h={28} stroke="none"><rect y="8" width="22" height="20" rx="1" fill="#6a6b6d" /><rect x="7" width="23" height="21" rx="1" fill="#f0f1f3" /><path d="M7 8h15v13H7z" fill="#a9abad" /></Svg></AppButton>
          <AppButton $dot aria-label="File Explorer"><Svg w={30} h={27} stroke="none"><path d="M0 2q0-2 2-2h8l3 4H0z" fill="#d99b12" /><rect y="3" width="30" height="23" rx="1" fill="#fbcb42" /><path d="M5 27v-5q0-3 3-3h14q3 0 3 3v5z" fill="#1774c4" /><path d="M9 23h12" stroke="#0c4f92" strokeWidth="1" /></Svg></AppButton>
          <AppButton $dot aria-label="Running application" />
          <AppButton $dot aria-label="Microsoft Edge">
            <Svg w={30} stroke="none">
              <defs><linearGradient id="edge" x2="1"><stop stopColor="#2ba6e0" /><stop offset="1" stopColor="#5fe06a" /></linearGradient></defs>
              <path d="M0 15C1 5 8 0 15 0c9 0 15 6 15 12 0 5-4 8-8 8-3 0-4-1-3-3 2-6-3-9-7-9C6 8 1 11 0 15z" fill="url(#edge)" />
              <path d="M0 15c1-5 6-8 11-7 3 0 6 2 7 4-5-1-7 3-7 6 0 7 7 10 17 5-3 5-8 7-13 7C6 30 0 23 0 15z" fill="#1474ce" />
              <path d="M10 12c-5 5-3 15 4 18 6 0 11-3 14-7-10 5-17 2-17-5 0-2 0-4 2-6z" fill="#0c4f9e" />
            </Svg>
          </AppButton>
          <Spacer $w={110} />
          <AppButton $dot aria-label="Firefox">
            <Svg w={30} stroke="none">
              <defs><linearGradient id="fox" x1="1" x2=".3" y2="1"><stop stopColor="#fff14a" /><stop offset=".5" stopColor="#ff8a22" /><stop offset="1" stopColor="#f0245c" /></linearGradient></defs>
              <path d="M1 13L3 5l3 3q2-3 5-3l-1 4h4q4-4 5-9 4 4 5 7l2-1q4 5 3 11c-1 7-7 12-14 12S0 24 1 13z" fill="url(#fox)" />
              <circle cx="14" cy="15" r="6" fill="#7a3fd6" /><path d="M4 10q6-2 10 3-6 0-7 3-3-2-3-6z" fill="#ff9a2a" />
            </Svg>
          </AppButton>
          <Spacer $w={220} />
          <AppButton $dot aria-label="Microsoft Teams">
            <Svg w={28} stroke="none"><circle cx="16" cy="7" r="5" fill="#7b83eb" /><path d="M10 10h16v10a7 7 0 0 1-16 2z" fill="#7b83eb" /><rect y="8" width="15" height="14" rx="1" fill="#4b53bc" /><path d="M4 12h7M7.500 12v8" stroke="#fff" /></Svg>
            <NewFlag>NEW</NewFlag><Badge>1</Badge>
          </AppButton>
          <AppButton $dot aria-label="Notepad"><Svg w={22} h={30} stroke="none"><rect y="2" width="22" height="27" rx="1" fill="#58c5e2" /><path d="M0 27h22v3H0z" fill="#f2e6d8" /><path d="M0 29h22" stroke="#a65a2a" /><path d="M4 10h14M4 15h14M4 20h14" stroke="#0e6a8e" /><path d="M2 2h19" stroke="#17486a" strokeWidth="3" strokeDasharray="2 2" /></Svg></AppButton>
          <AppButton $dot aria-label="PuTTYgen"><Svg w={28} h={30} stroke="none"><path d="M2 5h18v4h-3v3h-3V9H8v2H5V9H2z" fill="#8b8500" /><circle cx="23" cy="6" r="5" fill="#8b8500" /><circle cx="24" cy="6" r="1.500" fill="#222" /><path d="M20 10l-8 6h5l-7 6" stroke="#ff0" /><rect x="2" y="15" width="13" height="11" fill="#d0d0d0" /><rect x="4" y="17" width="8" height="7" fill="#1010d8" /><path d="M0 26h17v3H0z" fill="#ddd" /></Svg></AppButton>
          <AppButton $dot aria-label="PuTTY"><Svg w={28} h={30} stroke="none"><rect x="13" y="0" width="13" height="11" fill="#d0d0d0" /><rect x="15" y="2" width="8" height="7" fill="#1010d8" /><path d="M12 11h16v3H12z" fill="#ddd" /><path d="M20 9l-8 6h5l-7 6" stroke="#ff0" /><rect x="2" y="15" width="13" height="11" fill="#d0d0d0" /><rect x="4" y="17" width="8" height="7" fill="#1010d8" /><path d="M0 26h17v3H0z" fill="#ddd" /></Svg></AppButton>
          <AppButton $dot $wideDot $low aria-label="Snipping Tool"><Svg w={30} stroke="none"><rect width="22" height="22" rx="3" fill="#f2f2f3" /><path d="M16 5H4v13h5" stroke="#d4491f" strokeWidth="3" strokeDasharray="3 2" /><path d="M19 6v14H9" stroke="#8b9097" /><path d="M17 23l8-5" stroke="#46b4e8" /><circle cx="27" cy="16" r="2.500" stroke="#2a9be0" /><circle cx="16" cy="26" r="2.500" stroke="#2a9be0" /></Svg></AppButton>
          <Tray>
            <IconButton $w={40} aria-label="Show hidden icons"><Svg w={14} h={10}><path d="M1 8l6-6 6 6" /></Svg></IconButton>
            <IconButton $w={40} aria-label="OneDrive"><Svg w={22} h={16} stroke="none"><path d="M5 16a5 5 0 0 1-1-9Q6 0 12 1q5 1 6 6 4 1 4 5 0 4-5 4z" fill="#1272c8" /><path d="M3 15l9-6q3-2 6-1 4 1 4 4 0 4-5 4H5z" fill="#28a4ea" /></Svg></IconButton>
            <Lang>ENG</Lang>
            <IconButton $w={40} aria-label="Network"><Svg w={20} h={16} strokeWidth="1.500"><path d="M1 6q9-9 18 0M4 9q6-6 12 0M6 12q4-4 8 0" /><circle cx="10" cy="14" r="1.500" fill="currentColor" /></Svg></IconButton>
            <IconButton $w={26} aria-label="Volume"><Svg w={18} h={16} strokeWidth="1.500"><path d="M1 5h3l4-4v14l-4-4H1zM11 5q2 3 0 6M14 3q3 5 0 10" /></Svg></IconButton>
            <IconButton $w={34} aria-label="Battery"><Svg w={20} h={18} strokeWidth="1.500"><rect x="1" y="5" width="16" height="12" rx="3" /><path d="M8 7h7v8H3v-3z" fill="currentColor" /><path d="M18 9v4" /><path d="M4 0l-4 7h3l-1 5 5-7H4z" fill="currentColor" stroke="none" /></Svg></IconButton>
            <Clock>10:34 PM<br />3/15/2024</Clock>
            <IconButton $w={30} $color="#8fdcf8" aria-label="Notifications"><Svg w={16} h={20} stroke="none"><path d="M0 16l2-4V7a6 6 0 0 1 12 0v5l2 4zM5 17h6q-1 3-3 3t-3-3z" fill="currentColor" /></Svg></IconButton>
          </Tray>
        </Taskbar>
      </Page>
    </>
  );
}
